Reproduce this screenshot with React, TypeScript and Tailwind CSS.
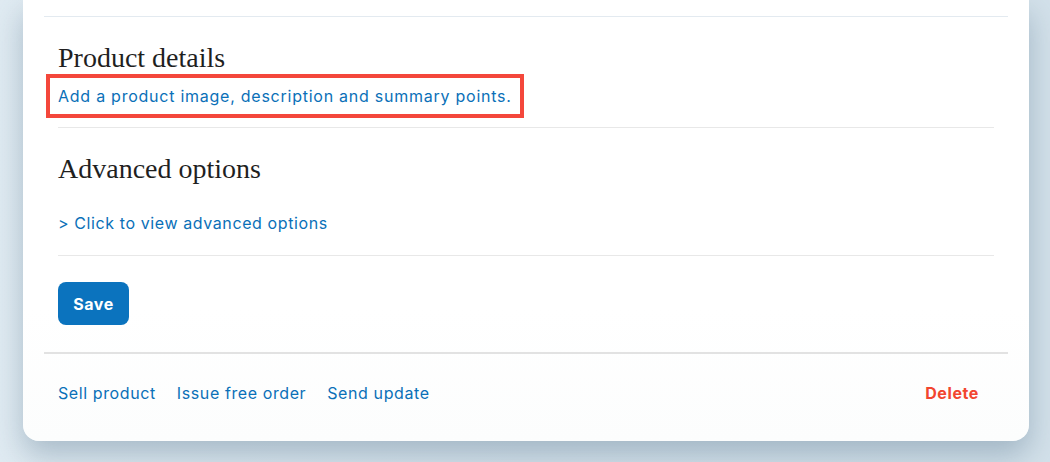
import React from 'react';

const sans = "font-['Inter','Noto_Sans',sans-serif] tracking-[0.6px]";
const serif = "font-['Liberation_Serif','Times_New_Roman',serif] tracking-normal";

const App: React.FC = () => {
    return (
        <div className="w-[1050px] h-[462px] overflow-hidden bg-gradient-to-r from-[#e0ebf2] via-[#d5e2eb] to-[#d3e1ea]">
            <div className="pl-[23px]">
                <div className={`w-[1006px] bg-gradient-to-b from-white from-70% to-[#fcfdfd] rounded-b-2xl shadow-[0_14px_30px_rgba(70,100,125,0.35)] pt-4 pb-[36px] px-[21px] ${sans}`}>
                    <div className="h-px bg-[#e3eaf0]" />

                    <div className="px-[14px]">
                        <h2 className={`mt-[25px] text-[28px] leading-[32px] text-[#1f1f1f] ${serif}`}>Product details</h2>
                        <div className="-ml-[12px] inline-block border-4 border-[#f4473b] px-[8px] py-[6px]">
                            <a className="block text-[16px] leading-[24px] tracking-[0.75px] text-[#0a70b8]">
                                Add a product image, description and summary points.
                            </a>
                        </div>
                        <div className="mt-[9px] h-px bg-[#e8e8e8]" />

                        <h2 className={`mt-[25px] text-[28px] leading-[32px] text-[#1f1f1f] ${serif}`}>Advanced options</h2>
                        <a className="block mt-[26px] text-[16px] leading-[24px] text-[#0a70b8]">&gt; Click to view advanced options</a>
                        <div className="mt-[20px] h-px bg-[#e8e8e8]" />

                        <button className="mt-[26px] h-[43px] w-[71px] rounded-lg bg-[#0b73be] text-white text-[16px] font-bold">
                            Save
                        </button>
                    </div>

                    <div className="mt-[27px] h-[2px] bg-[#e2e2e2]" />

                    <div className="mt-[27px] px-[14px] flex items-center text-[16px] leading-[24px]">
                        <div className="flex gap-[21px] text-[#0a70b8]">
                            <a>Sell product</a>
                            <a>Issue free order</a>
                            <a>Send update</a>
                        </div>
                        <a className="ml-auto mr-[15px] font-bold text-[#f2452f]">Delete</a>
                    </div>
                </div>
            </div>
        </div>
    );
};

export default App;
